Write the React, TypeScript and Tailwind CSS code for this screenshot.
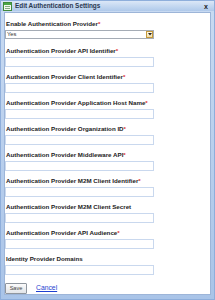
const fields = [
  { label: 'Authentication Provider API Identifier', required: true },
  { label: 'Authentication Provider Client Identifier', required: true },
  { label: 'Authentication Provider Application Host Name', required: true },
  { label: 'Authentication Provider Organization ID', required: true },
  { label: 'Authentication Provider Middleware API', required: true },
  { label: 'Authentication Provider M2M Client Identifier', required: true },
  { label: 'Authentication Provider M2M Client Secret', required: false },
  { label: 'Authentication Provider API Audience', required: true },
  { label: 'Identity Provider Domains', required: false },
];

function Label({ text, required }: { text: string; required: boolean }) {
  return (
    <div className="h-[8px] leading-[8px] pl-[1px] text-[6.2px] font-bold text-[#222] whitespace-nowrap">
      {text}
      {required && <span className="text-[#e03030]">*</span>}
    </div>
  );
}

export default function App() {
  return (
    <div
      className="w-[215px] h-[300px] flex flex-col bg-gradient-to-b from-[#c9dbf2] to-[#a9c4e8] border border-[#8eaedb]"
      style={{ fontFamily: '"Liberation Sans", Arial, sans-serif' }}
    >
      {/* title bar */}
      <div className="h-[13px] flex items-center px-[2px] bg-gradient-to-b from-[#dbe7f7] to-[#afc9ea]">
        <svg width="9" height="9" viewBox="0 0 9 9" className="shrink-0">
          <rect x="0.5" y="0.5" width="8" height="8" fill="#f4f8f0" stroke="#3f8a3a" />
          <rect x="1" y="1" width="7" height="2" fill="#4ca646" />
          <line x1="2" y1="4.5" x2="7" y2="4.5" stroke="#6a9a66" strokeWidth="0.8" />
          <line x1="2" y1="6.5" x2="7" y2="6.5" stroke="#6a9a66" strokeWidth="0.8" />
        </svg>
        <span className="ml-[3px] text-[6.4px] font-bold text-[#2a3850] leading-none whitespace-nowrap">
          Edit Authentication Settings
        </span>
        <span className="ml-auto mr-[4px] text-[7px] font-bold text-[#1a1a1a] leading-none">x</span>
      </div>

      {/* body */}
      <div className="flex-1 mx-[3px] mb-[4px] mt-[1px] bg-white border border-[#9db5d8] pt-[7px] flex flex-col">
        <Label text="Enable Authentication Provider" required />
        <div className="mt-[2px] w-[149px] h-[9px] flex border border-[#a5acb5] bg-white">
          <div className="flex-1 text-[5.8px] leading-[7px] pl-[1px] text-[#333]">Yes</div>
          <div className="w-[7px] h-full border border-[#c59a3c] bg-gradient-to-b from-[#fff8e6] to-[#f3dfa8] flex items-center justify-center">
            <svg width="4" height="3" viewBox="0 0 4 3">
              <path d="M0 0 H4 L2 2.5 Z" fill="#222" />
            </svg>
          </div>
        </div>
        <div className="h-[8px]" />

        {fields.map((f) => (
          <div key={f.label} className="flex flex-col mb-[6px]">
            <Label text={f.label} required={f.required} />
            <div className="mt-[2px] w-[149px] h-[10px] border border-[#c9d8ee] bg-white" />
          </div>
        ))}

        <div className="mt-[2px] flex items-center">
          <button className="w-[22px] h-[11px] rounded-[1px] border border-[#8f969e] bg-gradient-to-b from-[#fbfbfb] to-[#e2e4e8] text-[5.6px] text-[#444] leading-none">
            Save
          </button>
          <a className="ml-[9px] text-[6.8px] text-[#1e3fd0] underline leading-none">Cancel</a>
        </div>
      </div>
    </div>
  );
}
